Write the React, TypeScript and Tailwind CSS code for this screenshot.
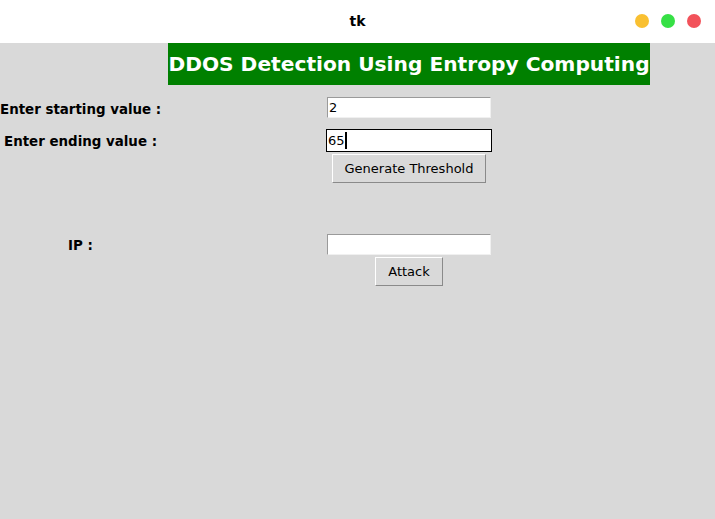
import React from "react";

const font = { fontFamily: '"DejaVu Sans", "Liberation Sans", sans-serif' };

function Entry({ value, focus }: { value?: string; focus?: boolean }) {
  if (focus) {
    return (
      <div className="ml-[326px] w-[166px] h-[23px] border border-black bg-white flex items-center pl-[1px] text-[13px] text-black">
        <span>{value}</span>
        <span className="inline-block w-[2px] h-[17px] bg-black" />
      </div>
    );
  }
  return (
    <div className="ml-[327px] w-[164px] h-[21px] border border-t-[#9a9a9a] border-l-[#9a9a9a] border-b-[#f0f0f0] border-r-[#f0f0f0] bg-white flex items-center pl-[1px] text-[13px] text-black">
      {value}
    </div>
  );
}

function Button({ label, left, width }: { label: string; left: string; width: string }) {
  return (
    <div
      className={`${left} ${width} h-[29px] border border-t-white border-l-white border-b-[#8a8a8a] border-r-[#8a8a8a] bg-[#d9d9d9] flex items-center justify-center text-[13px] text-black`}
    >
      {label}
    </div>
  );
}

export default function App() {
  return (
    <div className="w-[715px] h-[519px] bg-[#d9d9d9] flex flex-col overflow-hidden" style={font}>
      <div className="h-[43px] bg-white flex items-center relative shrink-0">
        <div className="flex-1 text-center text-[14px] font-bold text-black">tk</div>
        <div className="absolute right-[14px] top-[14px] flex gap-[12px]">
          <div className="w-[14px] h-[14px] rounded-full bg-[#f9c031]" />
          <div className="w-[14px] h-[14px] rounded-full bg-[#36e045]" />
          <div className="w-[14px] h-[14px] rounded-full bg-[#f2525a]" />
        </div>
      </div>
      <div className="ml-[168px] w-[482px] h-[42px] bg-[#008000] flex items-center justify-center text-white font-bold text-[20.2px] whitespace-nowrap shrink-0">
        DDOS Detection Using Entropy Computing
      </div>

      <div className="relative mt-[12px] flex items-center">
        <div className="absolute left-0 top-[3px] text-[13.4px] font-bold text-black">Enter starting value :</div>
        <Entry value="2" />
      </div>

      <div className="relative mt-[11px] flex items-center">
        <div className="absolute left-[4px] top-[3px] text-[13.4px] font-bold text-black">Enter ending value :</div>
        <Entry value="65" focus />
      </div>

      <div className="mt-[2px] flex">
        <Button label="Generate Threshold" left="ml-[332px]" width="w-[154px]" />
      </div>

      <div className="relative mt-[51px] flex items-center">
        <div className="absolute left-[68px] top-[2px] text-[13.4px] font-bold text-black">IP :</div>
        <Entry />
      </div>

      <div className="mt-[2px] flex">
        <Button label="Attack" left="ml-[375px]" width="w-[68px]" />
      </div>
    </div>
  );
}
